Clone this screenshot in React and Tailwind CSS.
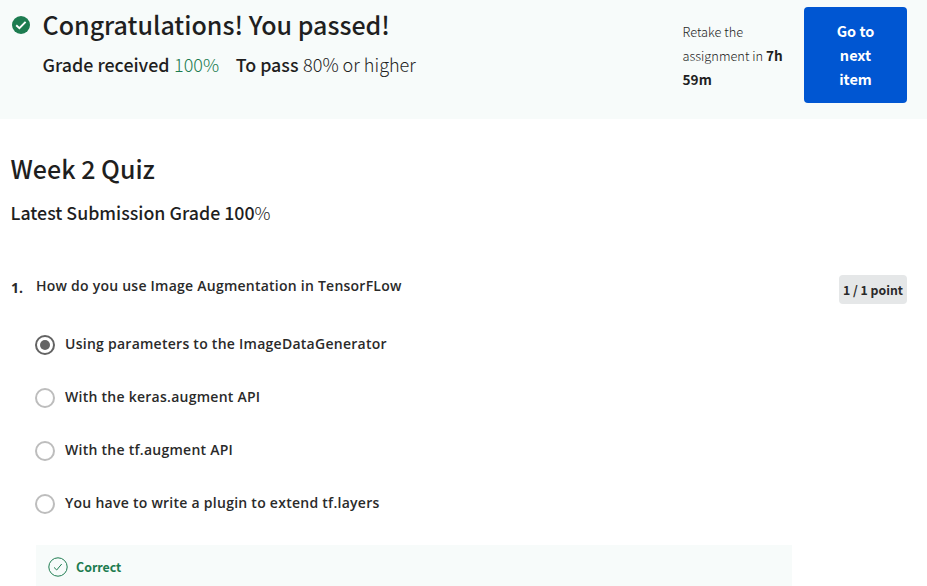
const cjk = "font-['Noto_Sans_CJK_SC','Source_Sans_Pro',sans-serif]";

const options = [
  { text: 'Using parameters to the ImageDataGenerator', selected: true },
  { text: 'With the keras.augment API' },
  { text: 'With the tf.augment API' },
  { text: 'You have to write a plugin to extend tf.layers' },
];

function Radio({ selected }) {
  return (
    <span
      className={
        'flex h-5 w-5 shrink-0 items-center justify-center rounded-full border-2 ' +
        (selected ? 'border-[#636363]' : 'border-[#bdbdbd]')
      }
    >
      {selected && <span className="h-2.5 w-2.5 rounded-full bg-[#636363]" />}
    </span>
  );
}

function Header() {
  return (
    <header className="flex h-[119px] items-start bg-[#f7fbfa] pl-3 text-[#1f1f1f]">
      <svg className="mt-4 h-[18px] w-[18px] shrink-0" viewBox="0 0 18 18">
        <circle cx="9" cy="9" r="9" fill="#1d7c50" />
        <path d="M4.2 9.2 7.4 12.2 13.6 5.9" fill="none" stroke="#fff" strokeWidth="1.9" />
      </svg>
      <div className="ml-[12.5px] w-[640px] whitespace-nowrap">
        <h1 className="mt-1.5 text-[25px] leading-9 font-medium">Congratulations! You passed!</h1>
        <p className="mt-2 flex text-[18px] leading-7">
          <span className="text-[17.85px] font-medium">Grade received</span>
          <span className="ml-[4.5px] font-light text-[#1d7c50]">100%</span>
          <span className="ml-[16.5px] text-[17.85px] font-medium">To pass</span>
          <span className="ml-[4.5px] text-[18.1px] font-light">80% or higher</span>
        </p>
      </div>
      <p className="mt-5 w-[121.5px] shrink-0 text-[12.8px] leading-6 font-light whitespace-nowrap">
        Retake the
        <br />
        assignment in <b className="text-[13.6px] leading-none font-bold tracking-[0.1px]">7h</b>
        <br />
        <b className="text-[13.6px] leading-none font-bold tracking-[0.1px]">59m</b>
      </p>
      <button className="mt-[7px] h-24 w-[103px] shrink-0 rounded-[4px] bg-[#0056d2] text-[14.5px] leading-6 font-bold text-white">
        Go to
        <br />
        next
        <br />
        item
      </button>
    </header>
  );
}

export default function App() {
  return (
    <div className={'h-[586px] w-[927px] overflow-hidden bg-white text-[#1f1f1f] ' + cjk}>
      <Header />
      <main className="pr-5 pl-[11px]">
        <h2 className="mt-[31px] -ml-[0.5px] text-[25px] leading-9 font-medium">Week 2 Quiz</h2>
        <p className="mt-3 -ml-[0.5px] text-[17.8px] leading-7 font-medium">
          Latest Submission Grade 100<span className="font-light">%</span>
        </p>
        <section className="mt-[49px] flex items-start font-['Open_Sans',sans-serif] text-sm font-semibold text-[#2a2a2a]">
          <span className="mt-[3px] w-[25px] shrink-0 leading-5 font-bold">1.</span>
          <div className="w-[756px] tracking-[0.26px]">
            <h3 className="h-[49px] pt-px leading-5 font-semibold tracking-[0.24px]">How do you use Image Augmentation in TensorFLow</h3>
            {options.map((o) => (
              <label key={o.text} className="flex h-[53px] items-start">
                <span className="-ml-px pt-[11px]">
                  <Radio selected={o.selected} />
                </span>
                <span className="ml-2.5 pt-2.5 leading-5">{o.text}</span>
              </label>
            ))}
            <div className="mt-[9px] flex h-[60px] bg-[#f7fbfa] pt-3 pl-3 tracking-normal text-[#1d7c50]">
              <svg className="h-5 w-5" viewBox="0 0 20 20" fill="none" stroke="currentColor">
                <circle cx="10" cy="10" r="9.2" strokeWidth="1" />
                <path d="M6 10.4 8.7 13 13.7 7" strokeWidth="1" />
              </svg>
              <span className={'ml-2 text-[12.4px] leading-5 font-bold ' + cjk}>Correct</span>
            </div>
          </div>
          <span className={'ml-auto h-[29px] w-[68px] rounded-[4px] bg-[#e5e7e8] text-center text-[12.3px] leading-[30px] font-bold whitespace-nowrap ' + cjk}>
            1 / 1 point
          </span>
        </section>
      </main>
    </div>
  );
}
